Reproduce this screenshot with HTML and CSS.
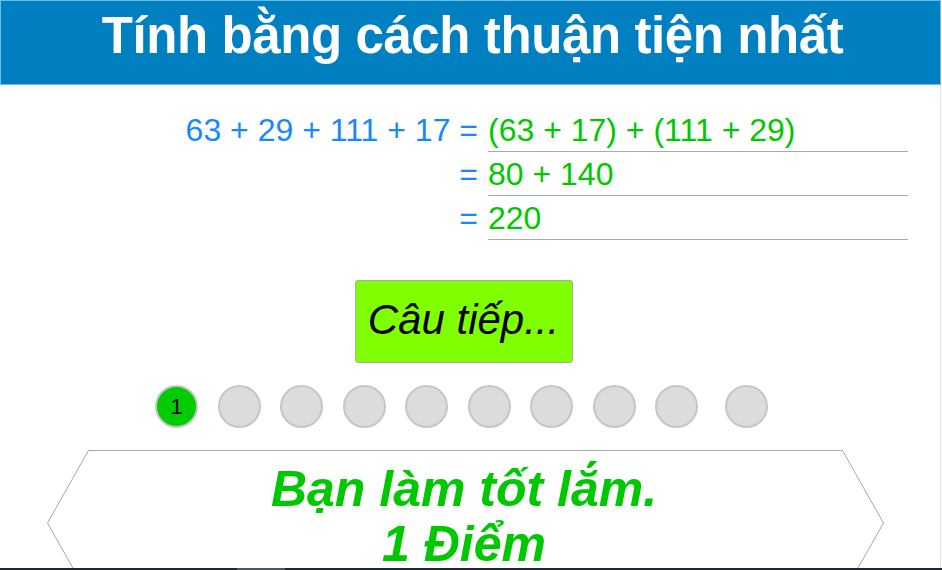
FILE: index.html
```html
<!DOCTYPE html>
<html lang="vi">
<head>
<meta charset="utf-8">
<title>Tính bằng cách thuận tiện nhất</title>
<link rel="stylesheet" href="styles.css">
</head>
<body>
<div class="page">
  <header class="title-bar">
    <h1 class="title">Tính bằng cách thuận tiện nhất</h1>
  </header>

  <section class="math">
    <div class="lhs">63 + 29 + 111 + 17 =</div>
    <div class="rhs">(63 + 17) + (111 + 29)</div>
    <div class="lhs">=</div>
    <div class="rhs">80 + 140</div>
    <div class="lhs">=</div>
    <div class="rhs">220</div>
  </section>

  <div class="actions">
    <button class="next-btn" type="button">Câu tiếp...</button>
  </div>

  <div class="progress">
    <span class="dot done">1</span>
    <span class="dot"></span>
    <span class="dot"></span>
    <span class="dot"></span>
    <span class="dot"></span>
    <span class="dot"></span>
    <span class="dot"></span>
    <span class="dot"></span>
    <span class="dot"></span>
    <span class="dot last"></span>
  </div>

  <div class="result">
    <svg class="hex" viewBox="0 0 838 146" preserveAspectRatio="none" aria-hidden="true">
      <polygon points="41.5,0.5 795.5,0.5 836.5,73 795.5,145.5 41.5,145.5 0.5,73" fill="#fff" stroke="#a8a8a8" stroke-width="1"/>
    </svg>
    <p class="result-text">Bạn làm tốt lắm.<br>1 Điểm</p>
  </div>
</div>
<div class="taskbar"><span class="taskbar-item"></span></div>
</body>
</html>
```

FILE: styles.css
```css
html, body {
  margin: 0;
  padding: 0;
  background: #fff;
  overflow: hidden;
}

body {
  font-family: "Liberation Sans", Arial, sans-serif;
}

.page {
  width: 940px;
  min-height: 100vh;
  border-right: 1px solid #e4e4e4;
}

.title-bar {
  box-sizing: border-box;
  width: 941px;
  height: 85px;
  background: #0080c0;
  border: 1px solid #6cbce6;
  padding-top: 6px;
  text-align: center;
}

.title {
  margin: 0 0 0 4px;
  color: #fff;
  font-size: 51px;
  font-weight: bold;
  line-height: 57px;
  letter-spacing: -0.4px;
}

.math {
  display: grid;
  grid-template-columns: 478px 420px;
  column-gap: 10px;
  grid-auto-rows: 44px;
  margin-top: 23px;
  font-size: 32px;
  line-height: 44px;
}

.lhs {
  text-align: right;
  color: #1888ff;
}

.rhs {
  color: #00c800;
  border-bottom: 1px solid #ababab;
  box-sizing: border-box;
  white-space: nowrap;
}

.actions {
  display: flex;
  justify-content: center;
  margin-top: 40px;
}

.next-btn {
  box-sizing: border-box;
  width: 218px;
  height: 83px;
  margin-left: -13px;
  background: #80ff00;
  border: 1px solid #a9a9a9;
  border-radius: 3px;
  font-family: "Liberation Sans", Arial, sans-serif;
  font-style: italic;
  font-size: 42px;
  color: #000;
  padding: 0 0 4px;
}

.progress {
  display: flex;
  gap: 19.5px;
  margin-top: 22px;
  padding-left: 155px;
}

.dot {
  box-sizing: border-box;
  width: 43px;
  height: 43px;
  border-radius: 50%;
  background: #dcdcdc;
  border: 2px solid #c6c6c6;
  display: flex;
  align-items: center;
  justify-content: center;
  font-size: 22px;
  color: #000;
}

.dot.done {
  background: #00cc00;
  border-color: #c6c6c6;
}

.dot.last {
  margin-left: 7px;
}

.result {
  position: relative;
  width: 838px;
  height: 146px;
  margin-top: 22px;
  margin-left: 47px;
}

.hex {
  position: absolute;
  inset: 0;
  width: 100%;
  height: 100%;
}

.result-text {
  position: relative;
  margin: 0;
  padding-top: 12px;
  padding-right: 4px;
  text-align: center;
  color: #00c800;
  font-weight: bold;
  font-style: italic;
  font-size: 50px;
  line-height: 55px;
}

.taskbar {
  position: fixed;
  left: 0;
  right: 0;
  bottom: 0;
  height: 2px;
  background: #1c2a30;
}

.taskbar-item {
  position: absolute;
  left: 237px;
  width: 48px;
  top: 0;
  bottom: 0;
  background: #4a585e;
}
```
